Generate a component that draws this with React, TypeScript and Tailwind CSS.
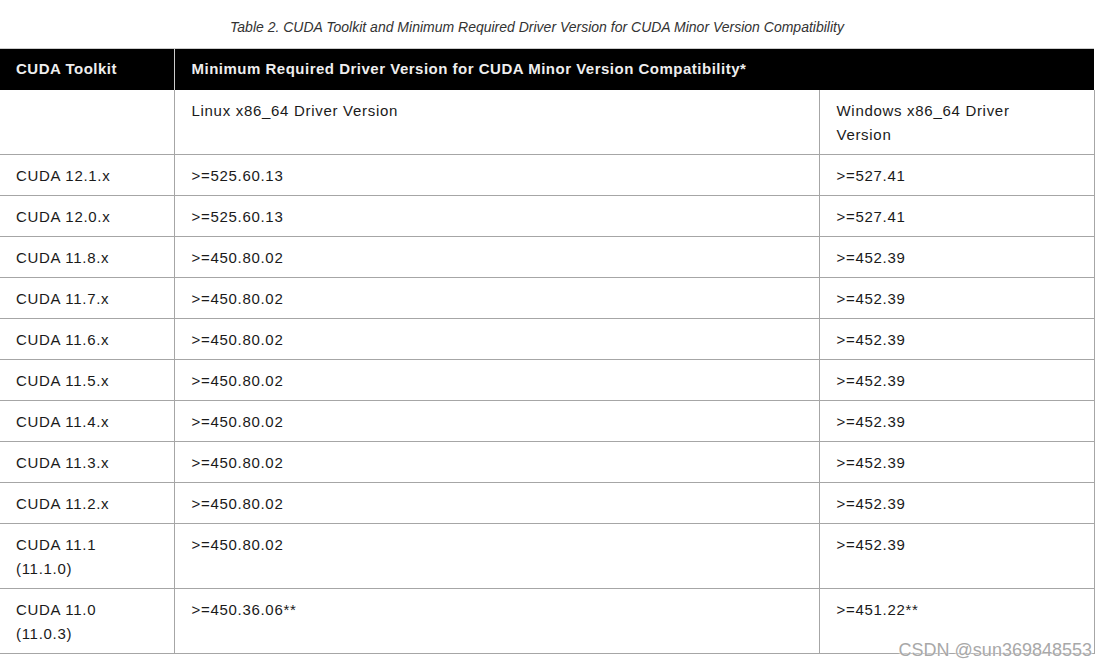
import React from "react";

const rows: { toolkit: string[]; linux: string; windows: string }[] = [
  { toolkit: ["CUDA 12.1.x"], linux: ">=525.60.13", windows: ">=527.41" },
  { toolkit: ["CUDA 12.0.x"], linux: ">=525.60.13", windows: ">=527.41" },
  { toolkit: ["CUDA 11.8.x"], linux: ">=450.80.02", windows: ">=452.39" },
  { toolkit: ["CUDA 11.7.x"], linux: ">=450.80.02", windows: ">=452.39" },
  { toolkit: ["CUDA 11.6.x"], linux: ">=450.80.02", windows: ">=452.39" },
  { toolkit: ["CUDA 11.5.x"], linux: ">=450.80.02", windows: ">=452.39" },
  { toolkit: ["CUDA 11.4.x"], linux: ">=450.80.02", windows: ">=452.39" },
  { toolkit: ["CUDA 11.3.x"], linux: ">=450.80.02", windows: ">=452.39" },
  { toolkit: ["CUDA 11.2.x"], linux: ">=450.80.02", windows: ">=452.39" },
  { toolkit: ["CUDA 11.1", "(11.1.0)"], linux: ">=450.80.02", windows: ">=452.39" },
  { toolkit: ["CUDA 11.0", "(11.0.3)"], linux: ">=450.36.06**", windows: ">=451.22**" },
];

const App = () => {
  return (
    <div className="relative w-[1107px] h-[666px] bg-white font-['Liberation_Sans',Arial,sans-serif] text-[#1a1a1a] overflow-hidden">
      {/* caption */}
      <div className="w-[1074px] pt-[18px] h-[48px] text-center italic text-[14px] leading-[18px] text-[#333]">
        Table 2. CUDA Toolkit and Minimum Required Driver Version for CUDA Minor Version Compatibility
      </div>

      <table className="w-[1094px] border-collapse table-fixed text-[15px] leading-[24px] tracking-[0.7px]">
        <colgroup>
          <col className="w-[174px]" />
          <col className="w-[645px]" />
          <col className="w-[275px]" />
        </colgroup>
        <thead>
          <tr className="bg-black text-[#eeeeee] font-bold h-[41px] tracking-[0.5px]">
            <th className="text-left align-middle pl-4 border-t border-[#cccccc] border-r">CUDA Toolkit</th>
            <th colSpan={2} className="text-left align-middle pl-[17px] border-t border-[#cccccc]">
              Minimum Required Driver Version for CUDA Minor Version Compatibility*
            </th>
          </tr>
        </thead>
        <tbody>
          <tr className="h-[65px] border-b border-[#a6a6a6]">
            <td className="border-r border-[#a6a6a6]"></td>
            <td className="align-top pt-[9px] pl-[17px] border-r border-[#a6a6a6]">Linux x86_64 Driver Version</td>
            <td className="align-top pt-[9px] pl-[17px] pr-8 border-r border-[#a6a6a6]">Windows x86_64 Driver Version</td>
          </tr>
          {rows.map((r) => (
            <tr key={r.toolkit[0]} className={`${r.toolkit.length > 1 ? "h-[65px]" : "h-[41px]"} border-b border-[#a6a6a6]`}>
              <td className="align-top pt-[9px] pl-4 border-r border-[#a6a6a6]">
                {r.toolkit.map((t) => (
                  <div key={t}>{t}</div>
                ))}
              </td>
              <td className="align-top pt-[9px] pl-[17px] border-r border-[#a6a6a6]">{r.linux}</td>
              <td className="align-top pt-[9px] pl-[17px] border-r border-[#a6a6a6]">{r.windows}</td>
            </tr>
          ))}
        </tbody>
      </table>

      {/* watermark */}
      <div className="absolute right-[15px] top-[639px] text-[18px] leading-[22px] text-[#a8a8a8] [text-shadow:0_0_2px_#fff,0_0_2px_#fff]">
        CSDN @sun369848553
      </div>
    </div>
  );
};

export default App;
